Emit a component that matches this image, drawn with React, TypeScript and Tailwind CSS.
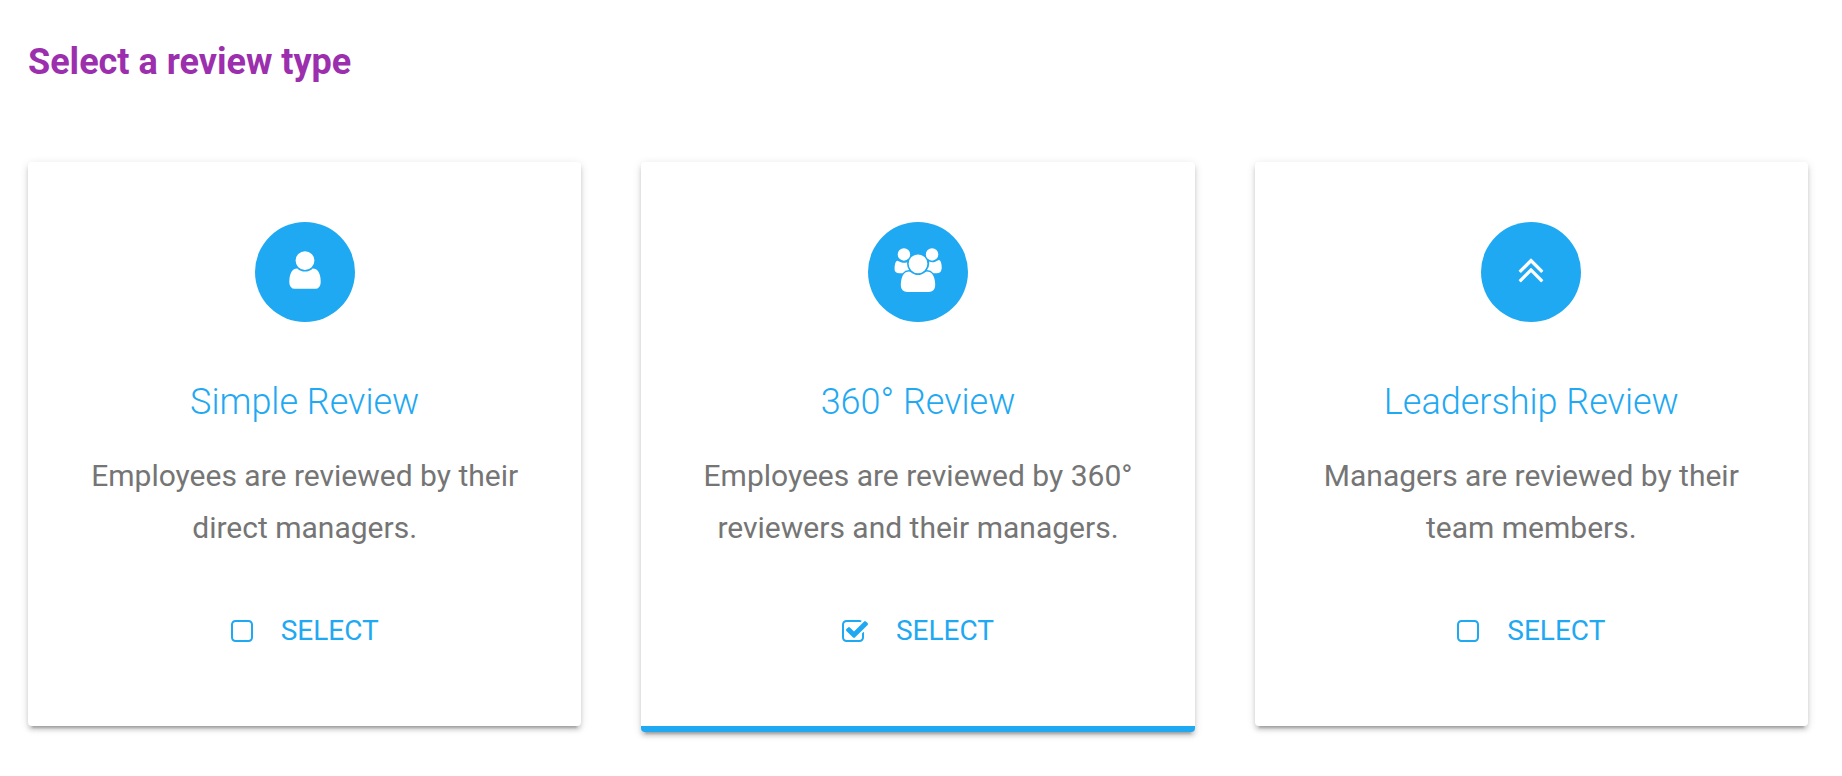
import { useState } from "react";

type IconProps = { className?: string };

function UserIcon({ className }: IconProps) {
  return (
    <svg viewBox="0 0 1792 1792" fill="currentColor" aria-hidden="true" className={className}>
      <path d="M1536 1399q0 109-62.5 187t-150.5 78h-854q-88 0-150.5-78t-62.5-187q0-85 8.5-160.5t31.5-152 58.5-131 94-89 134.5-34.5q131 128 313 128t313-128q76 0 134.5 34.5t94 89 58.5 131 31.5 152 8.5 160.5zm-256-887q0 159-112.5 271.5t-271.5 112.5-271.5-112.5-112.5-271.5 112.5-271.5 271.5-112.5 271.5 112.5 112.5 271.5z" />
    </svg>
  );
}

function UsersIcon({ className }: IconProps) {
  return (
    <svg viewBox="0 0 2048 1792" fill="currentColor" aria-hidden="true" className={className}>
      <path d="M657 896q-162 5-265 128h-134q-82 0-138-40.5t-56-118.5q0-353 124-353 6 0 43.5 21t97.5 42.5 119 21.5q67 0 133-23-5 37-5 66 0 159 93 278zm1071 637q0 120-73 189.5t-194 69.5h-874q-121 0-194-69.5t-73-189.5q0-53 3.5-103.5t14-109 26.5-108.5 43-97.5 62-81 85.5-53.5 111.5-20q10 0 43 21.5t73 48 107 48 135 21.5 135-21.5 107-48 73-48 43-21.5q61 0 111.5 20t85.5 53.5 62 81 43 97.5 26.5 108.5 14 109 3.5 103.5zm-1024-1277q0 106-75 181t-181 75-181-75-75-181 75-181 181-75 181 75 75 181zm704 384q0 159-112.5 271.5t-271.5 112.5-271.5-112.5-112.5-271.5 112.5-271.5 271.5-112.5 271.5 112.5 112.5 271.5zm576 225q0 78-56 118.5t-138 40.5h-134q-103-123-265-128 93-119 93-278 0-29-5-66 66 23 133 23 59 0 119-21.5t97.5-42.5 43.5-21q124 0 124 353zm-128-609q0 106-75 181t-181 75-181-75-75-181 75-181 181-75 181 75 75 181z" />
    </svg>
  );
}

function DoubleUpIcon({ className }: IconProps) {
  return (
    <svg viewBox="0 0 1792 1792" fill="currentColor" aria-hidden="true" className={className}>
      <path d="M1395 1312q0 13-10 23l-50 50q-10 10-23 10t-23-10l-393-393-393 393q-10 10-23 10t-23-10l-50-50q-10-10-10-23t10-23l466-466q10-10 23-10t23 10l466 466q10 10 10 23zm0-384q0 13-10 23l-50 50q-10 10-23 10t-23-10l-393-393-393 393q-10 10-23 10t-23-10l-50-50q-10-10-10-23t10-23l466-466q10-10 23-10t23 10l466 466q10 10 10 23z" />
    </svg>
  );
}

function BoxIcon({ checked }: { checked: boolean }) {
  return checked ? (
    <svg viewBox="64 0 1664 1792" fill="currentColor" aria-hidden="true" className="pointer-events-none col-start-1 row-start-1 h-7 w-[26px]">
      <path d="M1472 930v318q0 119-84.5 203.5t-203.5 84.5h-832q-119 0-203.5-84.5t-84.5-203.5v-832q0-119 84.5-203.5t203.5-84.5h832q63 0 117 25 15 7 18 23 3 17-9 29l-49 49q-10 10-23 10-3 0-9-2-23-6-45-6h-832q-66 0-113 47t-47 113v832q0 66 47 113t113 47h832q66 0 113-47t47-113v-254q0-13 9-22l64-64q10-10 23-10 6 0 12 3 20 8 20 29zm231-489l-814 814q-24 24-57 24t-57-24l-430-430q-24-24-24-57t24-57l110-110q24-24 57-24t57 24l263 263 647-647q24-24 57-24t57 24l110 110q24 24 24 57t-24 57z" />
    </svg>
  ) : (
    <svg viewBox="192 0 1408 1792" fill="currentColor" aria-hidden="true" className="pointer-events-none col-start-1 row-start-1 h-7 w-[22px]">
      <path d="M1312 256h-832q-66 0-113 47t-47 113v832q0 66 47 113t113 47h832q66 0 113-47t47-113v-832q0-66-47-113t-113-47zm288 160v832q0 119-84.5 203.5t-203.5 84.5h-832q-119 0-203.5-84.5t-84.5-203.5v-832q0-119 84.5-203.5t203.5-84.5h832q119 0 203.5 84.5t84.5 203.5z" />
    </svg>
  );
}

const reviewTypes = [
  {
    id: "simple",
    title: "Simple Review",
    description: "Employees are reviewed by their direct managers.",
    icon: <UserIcon className="h-11 w-11" />,
  },
  {
    id: "full-circle",
    title: "360° Review",
    description: "Employees are reviewed by 360° reviewers and their managers.",
    icon: <UsersIcon className="h-11 w-[50px]" />,
  },
  {
    id: "leadership",
    title: "Leadership Review",
    description: "Managers are reviewed by their team members.",
    icon: <DoubleUpIcon className="h-11 w-11" />,
  },
];

export default function App() {
  const [selected, setSelected] = useState("full-circle");

  return (
    <main className="min-h-screen bg-white pt-[38px] pr-[34px] pb-11 pl-7 font-['Roboto',sans-serif]">
      <h1 className="text-[36px] leading-[48px] font-bold text-[#9b2fae]">Select a review type</h1>
      <div className="mt-[76px] grid grid-cols-3 items-start gap-[60px]">
        {reviewTypes.map((type) => {
          const checked = type.id === selected;
          return (
            <section
              key={type.id}
              className={`flex flex-col items-center rounded bg-white px-[60px] pt-[60px] pb-20 text-center shadow-[0_4px_4px_rgba(0,0,0,0.14),0_6px_2px_-4px_rgba(0,0,0,0.2),0_2px_10px_rgba(0,0,0,0.12)] ${
                checked ? "border-b-[6px] border-[#1fa9f2]" : ""
              }`}
            >
              <div className="flex size-[100px] items-center justify-center rounded-full bg-[#1fa9f2] pb-1 text-white">
                {type.icon}
              </div>
              <h2 className="mt-14 text-[36px] leading-[48px] font-light text-[#1fa9f2]">{type.title}</h2>
              <p className="mt-6 text-[30px] leading-[52px] text-[#757575]">{type.description}</p>
              <label className="mt-[62px] flex cursor-pointer items-end gap-7 text-[28px] leading-[30px] text-[#1fa9f2]">
                <span className="grid">
                  <input
                    type="checkbox"
                    checked={checked}
                    onChange={() => setSelected(type.id)}
                    className="col-start-1 row-start-1 cursor-pointer appearance-none"
                  />
                  <BoxIcon checked={checked} />
                </span>
                SELECT
              </label>
            </section>
          );
        })}
      </div>
    </main>
  );
}
